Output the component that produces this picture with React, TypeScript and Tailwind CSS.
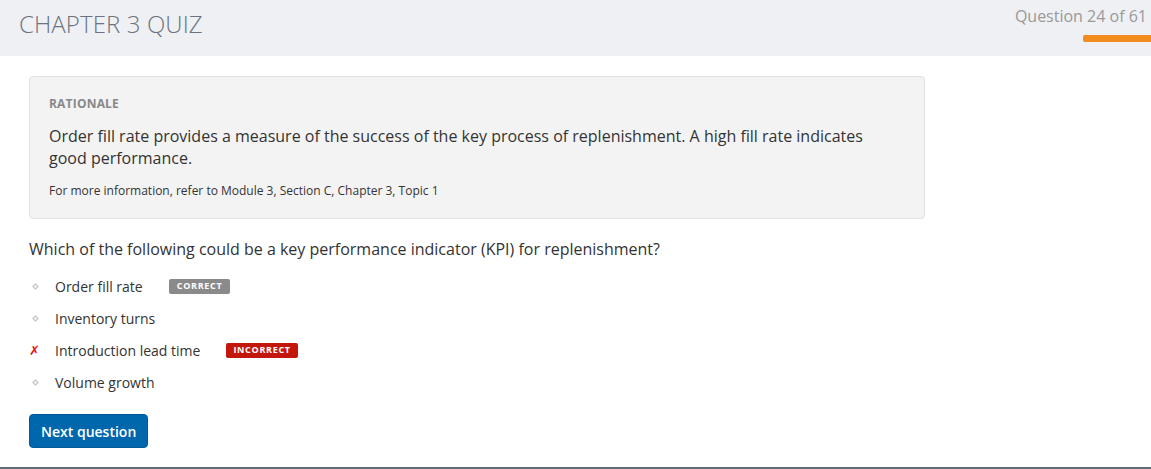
const options = [
  { label: 'Order fill rate', badge: 'correct' },
  { label: 'Inventory turns' },
  { label: 'Introduction lead time', badge: 'incorrect', wrong: true },
  { label: 'Volume growth' },
];

function Bullet() {
  return (
    <svg width="7" height="7" viewBox="0 0 7 7" className="text-[#c8c8c8]">
      <path d="M3.5 1 L6 3.5 L3.5 6 L1 3.5 Z" fill="none" stroke="currentColor" strokeWidth="1.3" />
    </svg>
  );
}

export default function App() {
  return (
    <div className="w-[1151px] h-[469px] bg-white flex flex-col font-['Open_Sans',sans-serif] text-[#333]">
      <header className="h-[56px] bg-[#eff0f4] flex justify-between shrink-0">
        <h1 className="pl-[19px] pt-[6px] text-[24px] font-light text-[#6b7380] tracking-[0.1px]">CHAPTER 3 QUIZ</h1>
        <div className="flex flex-col items-end pt-[4px]">
          <span className="pr-[4px] text-[16px] text-[#999]">Question 24 of 61</span>
          <div className="mt-[7px] w-[68px] h-[7px] bg-[#f28c1e] rounded-l-[2px]" />
        </div>
      </header>

      <main className="flex-1 px-[29px] pt-[20px]">
        <section className="w-[896px] bg-[#f3f3f3] border border-[#e2e2e2] rounded-[4px] pl-[19px] pr-[40px] pt-[18px] pb-[18px]">
          <div className="text-[12px] font-bold text-[#888] tracking-[0.2px]">RATIONALE</div>
          <p className="mt-[12px] text-[16px] leading-[22px] text-[#333]">
            Order fill rate provides a measure of the success of the key process of replenishment. A high fill rate indicates good performance.
          </p>
          <p className="mt-[13px] text-[12px] text-[#333]">For more information, refer to Module 3, Section C, Chapter 3, Topic 1</p>
        </section>

        <p className="mt-[18px] text-[16px] text-[#333]">Which of the following could be a key performance indicator (KPI) for replenishment?</p>

        <ul className="mt-[14px] flex flex-col gap-[10px]">
          {options.map((o) => (
            <li key={o.label} className="flex items-center h-[22px] text-[14px]">
              <span className="w-[26px] flex items-center">
                {o.wrong ? (
                  <span className="text-[13px] font-bold text-[#e8121d] font-['DejaVu_Sans',sans-serif] leading-none">✗</span>
                ) : (
                  <span className="pl-[3px]"><Bullet /></span>
                )}
              </span>
              <span>{o.label}</span>
              {o.badge === 'correct' && (
                <span className="ml-[26px] h-[15px] px-[8px] bg-[#8a8a8a] rounded-[2px] text-white text-[9px] font-bold tracking-[0.7px] flex items-center">CORRECT</span>
              )}
              {o.badge === 'incorrect' && (
                <span className="ml-[26px] h-[15px] px-[7px] bg-[#c4170c] rounded-[2px] text-white text-[9px] font-bold tracking-[0.7px] flex items-center">INCORRECT</span>
              )}
            </li>
          ))}
        </ul>

        <button className="mt-[21px] h-[34px] px-[11px] bg-[#0067ad] border border-[#005a99] rounded-[4px] text-white text-[14px] font-semibold">
          Next question
        </button>
      </main>

      <div className="h-[2px] bg-[#5f6d78] shrink-0" />
    </div>
  );
}
